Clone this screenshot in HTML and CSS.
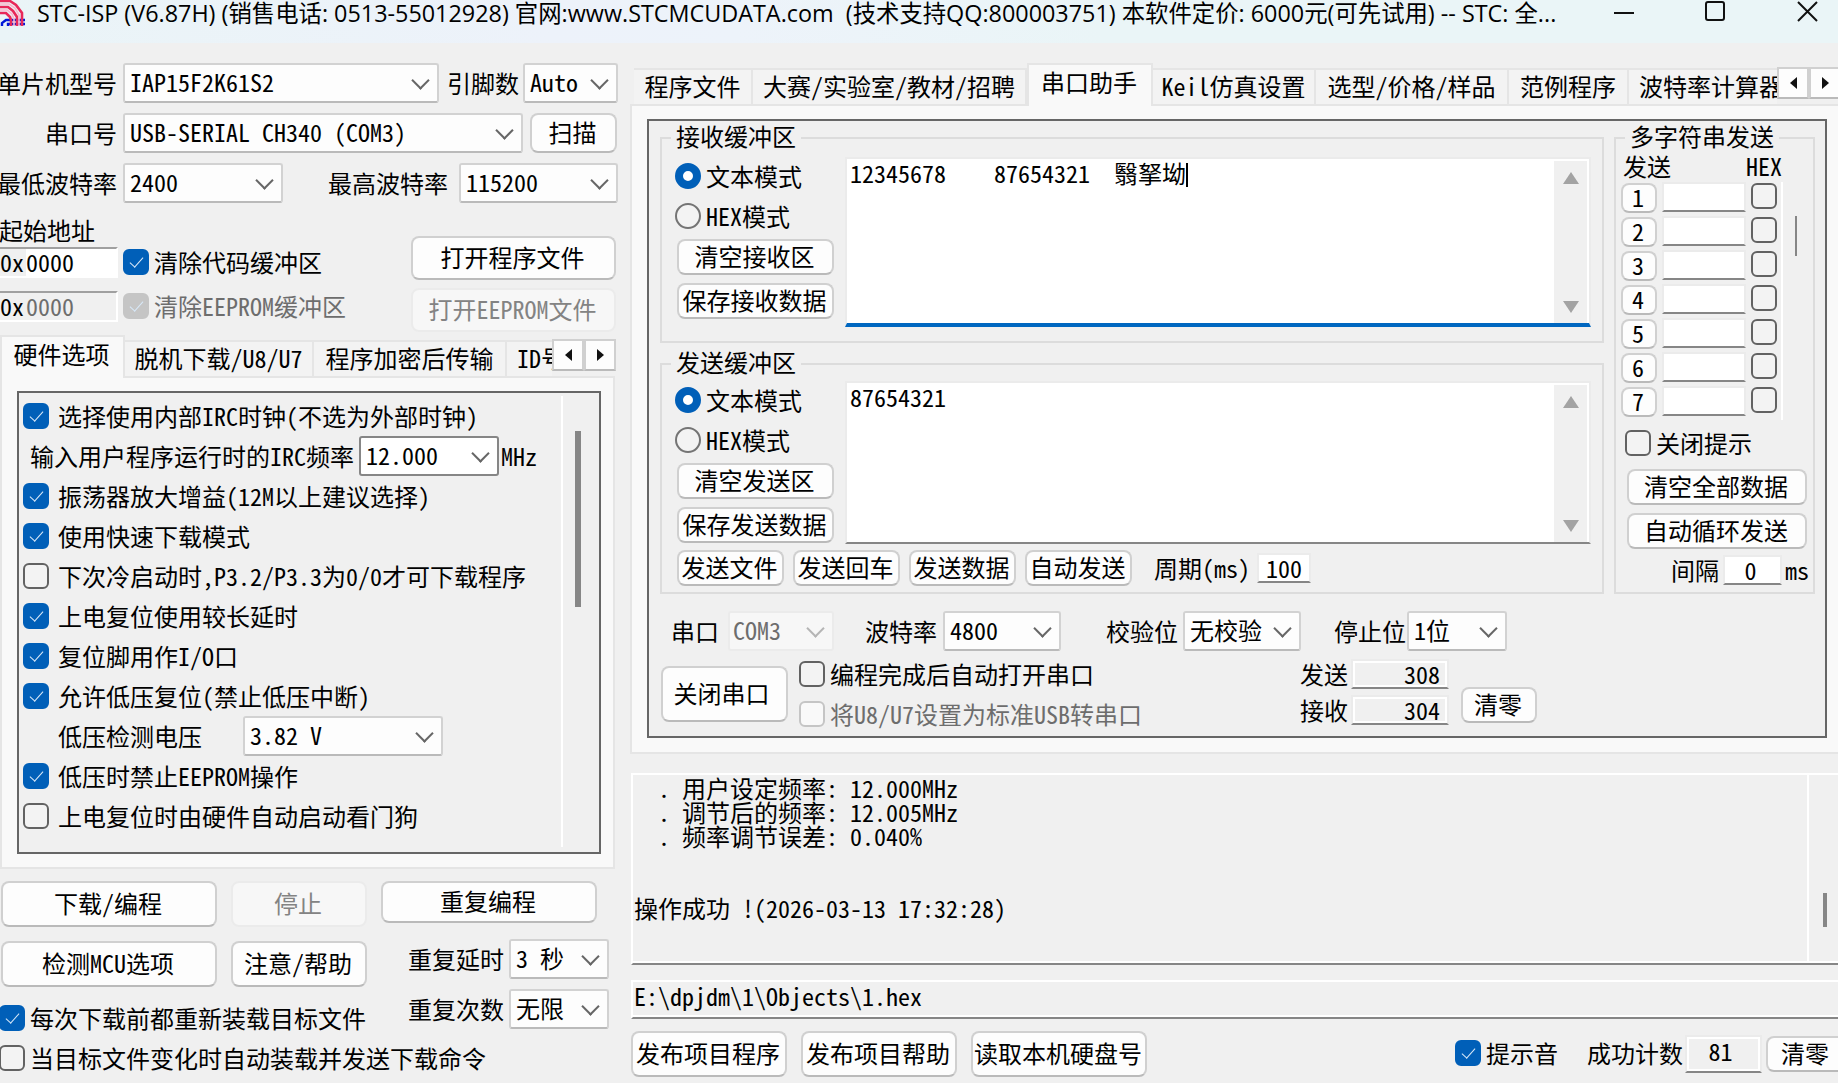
FILE: index.html
```
<!DOCTYPE html>
<html lang="zh-CN">
<head>
    <meta charset="UTF-8">
    <title>STC-ISP (V6.87H)</title>
    <link rel="stylesheet" href="styles.css">
</head>
<body>
    <!-- 标题栏 -->
    <header class="titlebar">
        <svg class="logo" width="26" height="28" viewBox="0 0 26 28" fill="none">
            <path d="M2 26v-3l4-3h19M8 26v-2h17" stroke="#0018d8" stroke-width="2.4"/>
            <path d="M0 1h10l6 4 6 8v13" stroke="#e8285a" stroke-width="2.6"/>
            <path d="M0 7h8l5 4 4 6v9" stroke="#e8285a" stroke-width="2.6"/>
            <path d="M0 13h6l4 4 1 3v6" stroke="#e8285a" stroke-width="2.6"/>
            <path d="M0 4h9l6 4 4 7v11M0 10h7l5 4 2 5v7" stroke="#fbb6cc" stroke-width="1.6"/>
        </svg>
        <span class="title">STC-ISP (V6.87H) (销售电话: 0513-55012928) 官网:www.STCMCUDATA.com&nbsp; (技术支持QQ:800003751) 本软件定价: 6000元(可先试用) -- STC: 全...</span>
        <svg class="win-btns" width="210" height="28" viewBox="0 0 210 28" fill="none" stroke="#111" stroke-width="2">
            <path d="M0 13h20"/>
            <rect x="92" y="2" width="18" height="18" rx="2"/>
            <path d="M184 2l19 19M203 2l-19 19"/>
        </svg>
    </header>

    <main class="main">
        <!-- 左侧: 下载设置 -->
        <section class="left">
            <div class="row r1">
                <label class="lab w117">单片机型号</label>
                <div class="select" style="width:316px">IAP15F2K61S2</div>
                <label class="pins">引脚数</label>
                <div class="select" style="width:95px">Auto</div>
            </div>
            <div class="row r2">
                <label class="lab w117">串口号</label>
                <div class="select" style="width:400px">USB-SERIAL CH340 (COM3)</div>
                <button class="btn scan">扫描</button>
            </div>
            <div class="row r3">
                <label class="lab w117">最低波特率</label>
                <div class="select" style="width:160px">2400</div>
                <label class="baud-max">最高波特率</label>
                <div class="select" style="width:159px">115200</div>
            </div>
            <div class="addr-title">起始地址</div>
            <div class="row addr addr1">
                <div class="hexbox"><span>0x</span><b>0000</b></div>
                <i class="check on"></i><span class="addr-text">清除代码缓冲区</span>
                <button class="btn open">打开程序文件</button>
            </div>
            <div class="row addr addr2">
                <div class="hexbox off"><span>0x</span><b>0000</b></div>
                <i class="check on gray"></i><span class="addr-text off">清除EEPROM缓冲区</span>
                <button class="btn open disabled">打开EEPROM文件</button>
            </div>

            <div class="tabs left-tabs">
                <div class="tab active" style="width:125px">硬件选项</div>
                <div class="tab" style="width:189px">脱机下载/U8/U7</div>
                <div class="tab" style="width:193px">程序加密后传输</div>
                <div class="tab cut" style="width:45px">ID号</div>
                <div class="spin"><i class="prev"></i><i class="next"></i></div>
            </div>
            <div class="page left-page">
                <div class="options">
                    <div class="opt-list">
                        <div class="opt"><i class="check on"></i>选择使用内部IRC时钟(不选为外部时钟)</div>
                        <div class="opt freq">输入用户程序运行时的IRC频率<div class="select dark" style="width:140px">12.000</div>MHz</div>
                        <div class="opt"><i class="check on"></i>振荡器放大增益(12M以上建议选择)</div>
                        <div class="opt"><i class="check on"></i>使用快速下载模式</div>
                        <div class="opt"><i class="check"></i>下次冷启动时,P3.2/P3.3为0/0才可下载程序</div>
                        <div class="opt"><i class="check on"></i>上电复位使用较长延时</div>
                        <div class="opt"><i class="check on"></i>复位脚用作I/O口</div>
                        <div class="opt"><i class="check on"></i>允许低压复位(禁止低压中断)</div>
                        <div class="opt volt"><span>低压检测电压</span><div class="select" style="width:200px">3.82 V</div></div>
                        <div class="opt"><i class="check on"></i>低压时禁止EEPROM操作</div>
                        <div class="opt"><i class="check"></i>上电复位时由硬件自动启动看门狗</div>
                    </div>
                    <div class="opt-scroll"></div>
                </div>
            </div>

            <div class="actions">
                <div class="act-left">
                    <div class="act-btns">
                        <button class="btn">下载/编程</button>
                        <button class="btn disabled">停止</button>
                        <button class="btn">检测MCU选项</button>
                        <button class="btn">注意/帮助</button>
                    </div>
                </div>
                <div class="act-right">
                    <button class="btn again">重复编程</button>
                    <div class="row rep"><label>重复延时</label><div class="select" style="width:100px">3 秒</div></div>
                    <div class="row rep"><label>重复次数</label><div class="select" style="width:100px">无限</div></div>
                </div>
            </div>
            <div class="reload"><i class="check on"></i>每次下载前都重新装载目标文件</div>
            <div class="reload second"><i class="check"></i>当目标文件变化时自动装载并发送下载命令</div>
        </section>

        <!-- 右侧: 串口助手 -->
        <section class="right">
            <div class="tabs right-tabs">
                <div class="tab" style="width:119px">程序文件</div>
                <div class="tab" style="width:274px">大赛/实验室/教材/招聘</div>
                <div class="tab active" style="width:126px">串口助手</div>
                <div class="tab" style="width:163px">Keil仿真设置</div>
                <div class="tab" style="width:193px">选型/价格/样品</div>
                <div class="tab" style="width:120px">范例程序</div>
                <div class="tab cut" style="width:148px">波特率计算器</div>
                <div class="spin"><i class="prev"></i><i class="next"></i></div>
            </div>
            <div class="page right-page">
                <div class="serial">
                    <div class="serial-top">
                        <div class="buffers">
                            <div class="group recv">
                                <span class="legend">接收缓冲区</span>
                                <div class="side">
                                    <div class="mode"><i class="radio on"></i>文本模式</div>
                                    <div class="mode"><i class="radio"></i>HEX模式</div>
                                    <button class="btn">清空接收区</button>
                                    <button class="btn">保存接收数据</button>
                                </div>
                                <div class="text focus">
                                    <pre>12345678    87654321  翳拏坳<span class="caret"></span></pre>
                                    <div class="vbar"><i class="up"></i><i class="down"></i></div>
                                </div>
                            </div>
                            <div class="group send">
                                <span class="legend">发送缓冲区</span>
                                <div class="side">
                                    <div class="mode"><i class="radio on"></i>文本模式</div>
                                    <div class="mode"><i class="radio"></i>HEX模式</div>
                                    <button class="btn">清空发送区</button>
                                    <button class="btn">保存发送数据</button>
                                </div>
                                <div class="text">
                                    <pre>87654321</pre>
                                    <div class="vbar"><i class="up"></i><i class="down"></i></div>
                                </div>
                                <div class="send-row">
                                    <button class="btn">发送文件</button>
                                    <button class="btn">发送回车</button>
                                    <button class="btn">发送数据</button>
                                    <button class="btn">自动发送</button>
                                    <span class="period">周期(ms)</span>
                                    <div class="field period-in">100</div>
                                </div>
                            </div>
                        </div>

                        <div class="group multi">
                            <span class="legend">多字符串发送</span>
                            <div class="multi-head"><span>发送</span><span>HEX</span></div>
                            <div class="multi-body">
                                <div class="multi-list">
                                    <div class="line"><button class="btn">1</button><div class="field"></div><i class="check"></i></div>
                                    <div class="line"><button class="btn">2</button><div class="field"></div><i class="check"></i></div>
                                    <div class="line"><button class="btn">3</button><div class="field"></div><i class="check"></i></div>
                                    <div class="line"><button class="btn">4</button><div class="field"></div><i class="check"></i></div>
                                    <div class="line"><button class="btn">5</button><div class="field"></div><i class="check"></i></div>
                                    <div class="line"><button class="btn">6</button><div class="field"></div><i class="check"></i></div>
                                    <div class="line"><button class="btn">7</button><div class="field"></div><i class="check"></i></div>
                                </div>
                                <div class="multi-scroll"></div>
                            </div>
                            <div class="no-tip"><i class="check"></i>关闭提示</div>
                            <button class="btn wide">清空全部数据</button>
                            <button class="btn wide">自动循环发送</button>
                            <div class="interval">间隔<div class="field">0</div>ms</div>
                        </div>
                    </div>

                    <div class="port-row">
                        <label>串口</label><div class="select disabled" style="width:106px">COM3</div>
                        <label class="l2">波特率</label><div class="select" style="width:118px">4800</div>
                        <label class="l3">校验位</label><div class="select" style="width:118px">无校验</div>
                        <label class="l4">停止位</label><div class="select" style="width:100px">1位</div>
                    </div>
                    <div class="port-bottom">
                        <button class="btn close-port">关闭串口</button>
                        <div class="port-checks">
                            <div><i class="check"></i>编程完成后自动打开串口</div>
                            <div class="off"><i class="check gray"></i>将U8/U7设置为标准USB转串口</div>
                        </div>
                        <div class="counts">
                            <div>发送<span class="field ro">308</span></div>
                            <div>接收<span class="field ro">304</span></div>
                        </div>
                        <button class="btn clear">清零</button>
                    </div>
                </div>
            </div>

            <!-- 日志 -->
            <div class="log">
                <pre>  . 用户设定频率: 12.000MHz
  . 调节后的频率: 12.005MHz
  . 频率调节误差: 0.040%


操作成功 !(2026-03-13 17:32:28)</pre>
                <div class="log-scroll"></div>
            </div>
            <div class="path">E:\dpjdm\1\Objects\1.hex</div>
            <div class="footer">
                <button class="btn" style="width:156px">发布项目程序</button>
                <button class="btn" style="width:156px">发布项目帮助</button>
                <button class="btn" style="width:176px">读取本机硬盘号</button>
                <div class="beep"><i class="check on"></i>提示音</div>
                <span class="ok-label">成功计数</span>
                <div class="field ro total">81</div>
                <button class="btn reset">清零</button>
            </div>
        </section>
    </main>
</body>
</html>
```

FILE: styles.css
```
* {
    box-sizing: border-box;
}

body {
    margin: 0;
    width: 1838px;
    height: 1083px;
    overflow: hidden;
    background: #f0f0f0;
    color: #000;
    font: 24px/26px "Noto Sans CJK SC", sans-serif;
    font-feature-settings: "hwid";
    white-space: nowrap;
}

pre {
    margin: 0;
    font: inherit;
}

i {
    font-style: normal;
}

/* 标题栏 */
.titlebar {
    height: 43px;
    display: flex;
    align-items: flex-start;
    background: linear-gradient(90deg, #eaf4f7, #edf2fa 30%, #edf3fa 40%, #eaf5f7 60%);
}

.title {
    width: 1530px;
    margin-left: 11px;
    font-family: "Open Sans", "Noto Sans CJK SC", sans-serif;
    font-size: 23.37px;
    font-feature-settings: normal;
}

.win-btns {
    margin-left: 47px;
}

.main {
    display: flex;
    height: 1040px;
}

/* 通用控件 */
.btn {
    display: flex;
    align-items: center;
    justify-content: center;
    flex: none;
    margin: 0;
    padding: 0 2px 2px 0;
    border: 2px solid #d0d0d0;
    border-bottom-color: #bababa;
    border-radius: 8px;
    background: #fdfdfd;
    color: #000;
    font: inherit;
    font-feature-settings: inherit;
    height: 36px;
}

.btn.disabled {
    background: #f7f7f7;
    border-color: #ebebeb;
    color: #838383;
}

.select {
    display: flex;
    align-items: center;
    justify-content: space-between;
    flex: none;
    height: 40px;
    padding: 0 10px 2px 5px;
    border: 2px solid #d2d2d2;
    border-bottom-color: #bababa;
    border-radius: 3px;
    background: #fdfdfd;
}

.select::after {
    content: "";
    width: 11px;
    height: 11px;
    margin-top: -4px;
    border: solid #666;
    border-width: 0 2px 2px 0;
    transform: rotate(45deg);
}

.select.dark {
    border-color: #868686;
    background: #fff;
}

.select.disabled {
    padding-left: 3px;
    border-color: #ebebeb;
    background: #f7f7f7;
    color: #6d6d6d;
}

.select.disabled::after {
    border-color: #b5b5b5;
}

.check {
    display: flex;
    align-items: center;
    justify-content: center;
    flex: none;
    width: 26px;
    height: 26px;
    border: 2px solid #626262;
    border-radius: 6px;
    background: #f3f3f3;
}

.check.on {
    border-color: #005fb8;
    background: #005fb8;
}

.check.on::after {
    content: "";
    width: 6px;
    height: 12px;
    margin-top: -3px;
    border: solid #d8e9f8;
    border-width: 0 1.6px 1.6px 0;
    transform: rotate(42deg);
}

.check.gray {
    border-color: #c5c5c5;
    background: #f9f9f9;
}

.check.on.gray {
    background: #c5c5c5;
}

.radio {
    flex: none;
    width: 26px;
    height: 26px;
    border: 2px solid #747474;
    border-radius: 50%;
    background: #f3f3f3;
}

.radio.on {
    border: 8px solid #005fb8;
    background: #fff;
}

.off {
    color: #6d6d6d;
}

.field {
    flex: none;
    height: 30px;
    border: 2px solid #ebebeb;
    border-bottom-color: #868686;
    background: #fff;
    line-height: 25px;
}

.field.ro {
    background: #f0f0f0;
    box-shadow: inset 0 0 0 2px #fff;
}

/* 左侧 */
.left {
    width: 622px;
    flex: none;
    padding-top: 20px;
}

.row {
    display: flex;
    align-items: center;
}

.r1, .r2, .r3 {
    height: 40px;
    margin-bottom: 10px;
}

.lab {
    text-align: right;
    margin-right: 6px;
}

.w117 {
    width: 117px;
    display: flex;
    justify-content: flex-end;
}

.pins {
    width: 84px;
    padding-left: 8px;
}

.scan {
    width: 87px;
    height: 40px;
    margin-left: 7px;
}

.baud-max {
    width: 176px;
    padding-left: 45px;
}

.addr-title {
    height: 24px;
    margin: 15px 0 0 -1px;
    line-height: 24px;
}

.addr {
    height: 44px;
}

.addr1 {
    margin-top: -6px;
}

.addr2 {
    margin-top: 8px;
}

.hexbox {
    display: flex;
    width: 118px;
    height: 31px;
    margin-right: 5px;
    border: solid #fff;
    border-width: 2px 2px 2px 0;
    border-top-color: #a0a0a0;
}

.addr1 > :not(.open) {
    margin-top: 8px;
}

.addr2 > :not(.open) {
    margin-bottom: 8px;
}

.hexbox span {
    width: 26px;
}

.hexbox b {
    flex: 1;
    background: #fff;
    font-weight: normal;
}

.hexbox.off b {
    background: none;
}

.hexbox.off span {
    color: #000;
}

.addr-text {
    width: 257px;
    margin-left: 5px;
}

.addr .open {
    width: 205px;
    height: 44px;
}

/* 选项卡 */
.tabs {
    display: flex;
    align-items: flex-end;
    position: relative;
}

.tab {
    flex: none;
    height: 36px;
    padding-top: 3px;
    border: 2px solid #e5e5e5;
    border-width: 2px 2px 0 0;
    background: #f3f3f3;
    text-align: center;
}

.tab.active {
    height: 43px;
    padding: 4px 2px 0 0;
    border-left-width: 2px;
    background: #f9f9f9;
    margin-bottom: -2px;
    z-index: 1;
}

.tab.cut {
    padding-left: 10px;
    border-right: 0;
    overflow: hidden;
    text-align: left;
}

.spin {
    display: flex;
    align-self: flex-start;
    height: 32px;
    margin: 4px 0 0 0;
}

.spin i {
    display: flex;
    align-items: center;
    justify-content: center;
    width: 32px;
    border: 2px solid #d0d0d0;
    border-bottom-color: #bababa;
    background: #fdfdfd;
}

.spin i::after {
    content: "";
    border: 6px solid transparent;
}

.spin .prev::after {
    border-right: 7px solid #111;
    border-left: 0;
}

.spin .next::after {
    border-left: 7px solid #111;
    border-right: 0;
}

.page {
    border: 2px solid #e5e5e5;
    background: #f9f9f9;
}

.left-tabs {
    height: 41px;
    margin-top: 3px;
}

.left-page {
    width: 615px;
    height: 493px;
    padding: 13px 12px 13px 15px;
    border-left-width: 2px;
}

.options {
    display: flex;
    height: 463px;
    padding: 3px 18px 4px 4px;
    border: 2px solid #666;
    background: #f0f0f0;
}

.opt-list {
    width: 540px;
    height: 451px;
    border-right: 2px solid #fff;
}

.opt {
    display: flex;
    align-items: center;
    height: 40px;
}

.opt .check {
    margin-right: 9px;
}

.freq {
    padding-left: 7px;
}

.freq .select {
    margin: 0 2px 0 5px;
}

.volt span {
    width: 185px;
    margin-left: 35px;
}

.opt-scroll {
    width: 6px;
    height: 176px;
    margin: 35px 0 0 12px;
    background: #868686;
}

.actions {
    display: flex;
    height: 118px;
    padding: 12px 0 0 1px;
}

.act-btns {
    display: grid;
    grid-template-columns: 216px 136px;
    gap: 14px;
}

.act-btns .btn {
    height: 46px;
}

.act-left {
    width: 380px;
}

.again {
    width: 216px;
    height: 42px;
    margin-bottom: 16px;
}

.rep {
    height: 40px;
    margin-bottom: 10px;
    padding-left: 27px;
}

.rep label {
    width: 101px;
}

.reload {
    display: flex;
    align-items: center;
    gap: 5px;
    height: 40px;
    width: 490px;
    margin: 11px 0 0 -1px;
}

.reload.second {
    margin-top: 0;
}

/* 右侧 */
.right {
    flex: none;
    width: 1216px;
    padding: 20px 0 0 8px;
}

.right-tabs {
    height: 41px;
    padding-left: 4px;
}

.right-page {
    width: 1240px;
    height: 650px;
    padding: 13px 0 0 15px;
}

.right-page .serial {
    width: 1180px;
    height: 619px;
    padding: 0 10px 0 11px;
    border: 2px solid #666;
    background: #f0f0f0;
}

.serial-top {
    display: flex;
    justify-content: space-between;
    padding-top: 16px;
}

.group {
    position: relative;
    border: 2px solid #dcdcdc;
}

.legend {
    position: absolute;
    top: -16px;
    left: 9px;
    padding: 0 5px;
    background: #f0f0f0;
}

.buffers {
    width: 944px;
}

.recv, .send {
    display: flex;
    flex-wrap: wrap;
    align-content: flex-start;
}

.recv {
    height: 206px;
    padding: 18px 0 0 13px;
}

.send {
    height: 231px;
    margin-top: 20px;
    padding: 16px 0 0 13px;
}

.side {
    width: 170px;
}

.side .btn {
    width: 157px;
    margin: 0 0 8px 2px;
}

.mode {
    display: flex;
    align-items: center;
    gap: 5px;
    height: 40px;
    margin-top: -1px;
}

.mode + .mode {
    margin: 0 0 3px;
}

.text {
    display: flex;
    justify-content: space-between;
    width: 746px;
    height: 170px;
    border: 2px solid #ebebeb;
    border-bottom: 2px solid #868686;
    background: #fff;
}

.text pre {
    padding: 1px 0 0 3px;
}

.text.focus {
    border-bottom: 4px solid #0067c0;
}

.caret {
    display: inline-block;
    width: 2px;
    height: 24px;
    background: #000;
    vertical-align: -4px;
}

.send .text {
    height: 163px;
}

.vbar {
    display: flex;
    flex-direction: column;
    justify-content: space-between;
    align-items: center;
    width: 33px;
    margin: 2px 2px 0 0;
    padding: 11px 0 10px;
    background: #f0f0f0;
}

.vbar i {
    border: 8px solid transparent;
}

.vbar .up {
    border-top: 0;
    border-bottom: 12px solid #a3a3a3;
}

.vbar .down {
    border-bottom: 0;
    border-top: 12px solid #a3a3a3;
}

.send .side {
    height: 169px;
}

.send-row {
    display: flex;
    align-items: center;
    gap: 9px;
    padding-left: 2px;
}

.send-row .btn {
    width: 107px;
}

.period {
    margin-left: 13px;
}

.period-in {
    width: 54px;
    margin-left: -2px;
    text-align: center;
}

.multi {
    width: 201px;
    height: 457px;
    padding: 14px 0 0 5px;
}

.multi-head {
    display: flex;
    justify-content: space-between;
    width: 159px;
    margin-left: 2px;
    margin-bottom: 3px;
}

.multi-body {
    display: flex;
    height: 238px;
}

.multi-list {
    width: 162px;
    border-right: 2px solid #fff;
}

.line {
    display: flex;
    gap: 5px;
    height: 34px;
}

.line .btn {
    width: 36px;
    height: 30px;
    margin-top: 1px;
}

.line .field {
    width: 84px;
}

.line .check {
    margin-top: 1px;
}

.multi-scroll {
    width: 2px;
    height: 40px;
    margin: 34px 0 0 12px;
    background: #868686;
}

.no-tip {
    display: flex;
    align-items: center;
    gap: 5px;
    height: 26px;
    margin: 10px 0 13px 4px;
}

.wide {
    width: 180px;
    margin: 0 0 8px 6px;
}

.interval {
    display: flex;
    align-items: center;
    margin-top: -2px;
    padding-left: 50px;
}

.interval .field {
    width: 59px;
    padding-right: 4px;
    margin: 0 3px 0 4px;
    text-align: center;
}

.port-row {
    display: flex;
    align-items: center;
    height: 40px;
    margin: 17px 0 0 11px;
}

.port-row label {
    width: 57px;
}

.port-row .l2 {
    width: 109px;
    padding-left: 31px;
}

.port-row .l3 {
    width: 122px;
    padding-left: 45px;
}

.port-row .l4 {
    width: 106px;
    padding-left: 33px;
}

.port-bottom {
    display: flex;
    margin-top: 9px;
}

.close-port {
    width: 127px;
    height: 56px;
    margin: 6px 11px 0 1px;
    padding-right: 6px;
}

.port-checks {
    width: 501px;
}

.port-checks div {
    display: flex;
    align-items: center;
    gap: 5px;
    height: 28px;
    margin-bottom: 12px;
}

.counts {
    width: 161px;
    margin-top: -2px;
}

.counts div {
    display: flex;
    align-items: center;
    gap: 3px;
    height: 31px;
    margin-bottom: 5px;
}

.counts .field {
    width: 98px;
    padding-right: 7px;
    text-align: right;
}

.clear {
    width: 76px;
    margin-top: 27px;
}

/* 日志 */
.log {
    display: flex;
    height: 192px;
    margin: 19px 0 0 1px;
    border: solid #fff;
    border-width: 2px 0 0 2px;
    border-bottom: 2px solid #868686;
    box-shadow: inset 0 -2px 0 #fff;
}

.log pre {
    width: 1176px;
    height: 186px;
    padding: 1px 0 0 1px;
    border-right: 2px solid #fff;
    line-height: 24px;
}

.log-scroll {
    width: 4px;
    height: 34px;
    margin: 118px 0 0 14px;
    background: #868686;
}

.path {
    height: 39px;
    margin: 15px 0 0 1px;
    padding: 1px 0 0 1px;
    border: solid #fff;
    border-width: 2px 0 0 2px;
    border-bottom: 2px solid #868686;
    box-shadow: inset 0 -2px 0 #fff;
}

.footer {
    display: flex;
    align-items: center;
    height: 46px;
    margin: 12px 0 0 1px;
    gap: 14px;
}

.footer .btn {
    height: 46px;
}

.beep {
    display: flex;
    align-items: center;
    gap: 5px;
    width: 120px;
    margin-left: 294px;
    margin-top: -3px;
}

.ok-label {
    width: 84px;
    margin: -3px 0 0 15px;
}

.footer .total {
    width: 77px;
    height: 38px;
    padding-right: 6px;
    line-height: 28px;
    text-align: center;
}

.footer .reset {
    width: 80px;
    height: 36px;
    margin-left: -10px;
}
```
